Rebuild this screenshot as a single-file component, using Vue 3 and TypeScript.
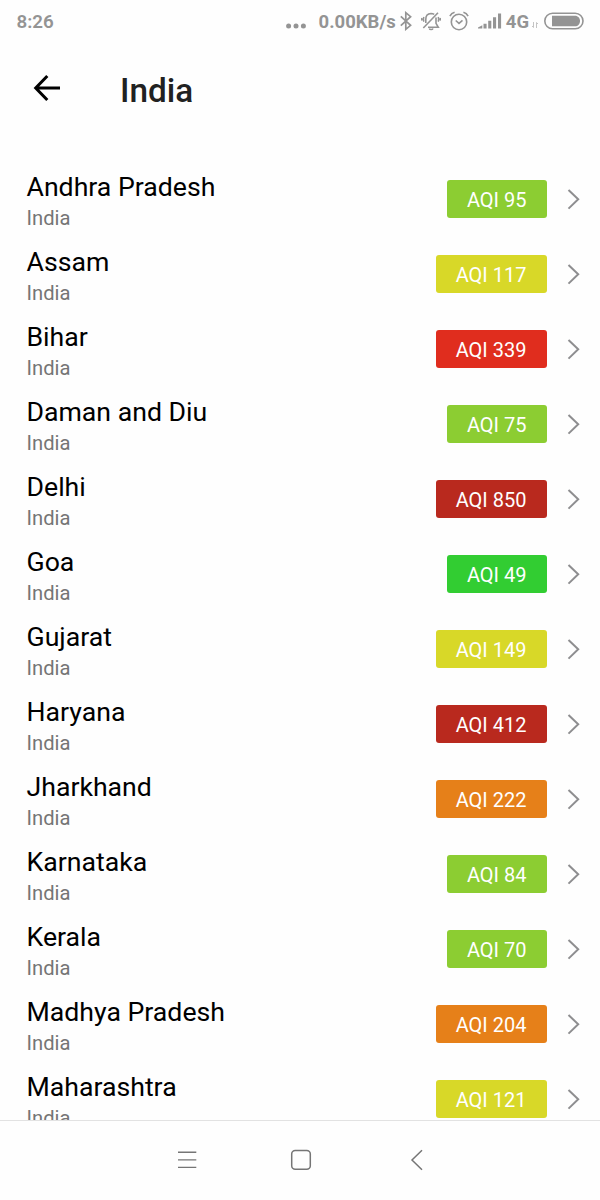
<script setup lang="ts">
interface Region {
  name: string
  aqi: number
  level: 'good' | 'fair' | 'moderate' | 'poor' | 'bad' | 'severe'
}

const country = 'India'

const regions: Region[] = [
  { name: 'Andhra Pradesh', aqi: 95, level: 'fair' },
  { name: 'Assam', aqi: 117, level: 'moderate' },
  { name: 'Bihar', aqi: 339, level: 'bad' },
  { name: 'Daman and Diu', aqi: 75, level: 'fair' },
  { name: 'Delhi', aqi: 850, level: 'severe' },
  { name: 'Goa', aqi: 49, level: 'good' },
  { name: 'Gujarat', aqi: 149, level: 'moderate' },
  { name: 'Haryana', aqi: 412, level: 'severe' },
  { name: 'Jharkhand', aqi: 222, level: 'poor' },
  { name: 'Karnataka', aqi: 84, level: 'fair' },
  { name: 'Kerala', aqi: 70, level: 'fair' },
  { name: 'Madhya Pradesh', aqi: 204, level: 'poor' },
  { name: 'Maharashtra', aqi: 121, level: 'moderate' },
]
</script>

<template>
  <div class="screen">
    <div class="status">
      <span class="clock">8:26</span>
      <div class="indicators">
        <svg class="dots" width="20" height="6" viewBox="0 0 20 6" fill="#949494">
          <circle cx="2.6" cy="3" r="2.5" />
          <circle cx="10" cy="3" r="2.5" />
          <circle cx="17.4" cy="3" r="2.5" />
        </svg>
        <span class="speed">0.00KB/s</span>
        <svg class="bluetooth" width="14" height="20" viewBox="0 0 14 20" fill="none" stroke="#949494" stroke-width="1.7">
          <path d="M1.8 5.4 11.6 14.3 6.8 18.3V1.7l4.8 4L1.8 14.6" />
        </svg>
        <svg class="bell" width="20" height="20" viewBox="0 0 20 20" fill="none" stroke="#949494" stroke-width="1.6">
          <path d="M4.800 12V8.200C4.800 5 6.800 2.700 10 2.500c1.200 0 2.300.3 3.200.9M15 6.500v5.800l2.300 4H7" />
          <path d="M17 1.700 2.300 17" />
          <path d="M8.300 17.500c.5 1.400 3.100 1.400 3.700 0" />
          <path d="M2.900 6c-.6 1.500-.6 3.200 0 4.600M1 7.100c-.4.900-.4 1.600 0 2.400M17.200 6c.6 1.500.6 3.200 0 4.600M19.100 7.100c.4.900.4 1.600 0 2.400" />
        </svg>
        <svg class="alarm" width="20" height="20" viewBox="0 0 20 20" fill="none" stroke="#949494" stroke-width="1.6">
          <circle cx="10" cy="11" r="7.700" />
          <path d="M6.700 9.500 10 12.400l3.500-3M.9 5.200C1.800 3.300 3.400 1.900 5.600 1.300M14.400 1.300c2.200.6 3.800 2 4.700 3.900" />
        </svg>
        <svg class="signal" width="24" height="16" viewBox="0 0 24 16" fill="#949494">
          <path d="M0 15.500v-1l4.300-2.300v3.300zM5.500 10.700h3.100v4.800H5.500zM10.200 7.700h3.100v7.800h-3.100zM15 4.300h3.100v11.200H15zM20 .5h3.100v15H20z" />
        </svg>
        <span class="network">4G</span>
        <svg class="traffic" width="8" height="8" viewBox="0 0 8 8" fill="none" stroke="#c4c4c4" stroke-width="1">
          <path d="M2.500 1v5.500L1 5M5.500 7V1.500L7 3" />
        </svg>
        <svg class="battery" width="40" height="18" viewBox="0 0 40 18">
          <rect x=".8" y="1.200" width="38.200" height="15.600" rx="7.800" fill="none" stroke="#949494" stroke-width="1.600" />
          <path d="M8 3.700H31c3 0 5 2.400 5 5.300s-2 5.300-5 5.300H8z" fill="#949494" />
        </svg>
      </div>
    </div>

    <header class="toolbar">
      <svg class="back" width="28" height="28" viewBox="0 0 28 28" fill="none" stroke="#000" stroke-width="3">
        <path d="M27 14H2.800M14.300 2 2.700 14l11.600 12" />
      </svg>
      <h1>{{ country }}</h1>
    </header>

    <ul class="list">
      <li v-for="region in regions" :key="region.name" class="row">
        <div class="labels">
          <span class="name">{{ region.name }}</span>
          <span class="country">{{ country }}</span>
        </div>
        <span class="badge" :class="region.level">AQI {{ region.aqi }}</span>
        <svg class="chevron" width="13" height="22" viewBox="0 0 13 22" fill="none" stroke="#8e8e90" stroke-width="2">
          <path d="M1.500 2 11.200 11.300 1.500 20.600" />
        </svg>
      </li>
    </ul>

    <nav class="navbar">
      <svg width="20" height="20" viewBox="0 0 20 20" stroke="#757575" stroke-width="1.400">
        <path d="M1 2.300h18.300M1 9.900h18.300M1 17.400h18.300" />
      </svg>
      <svg class="home" width="22" height="22" viewBox="0 0 22 22" fill="none" stroke="#757575" stroke-width="1.500">
        <rect x="1.700" y="1.600" width="18.600" height="18.600" rx="3.500" />
      </svg>
      <svg class="previous" width="14" height="22" viewBox="0 0 14 22" fill="none" stroke="#757575" stroke-width="1.500">
        <path d="M12 1.300 2 11l10 9.700" />
      </svg>
    </nav>
  </div>
</template>

<style>
body {
  margin: 0;
}
</style>

<style scoped>
.screen {
  display: flex;
  flex-direction: column;
  width: 600px;
  height: 1200px;
  overflow: hidden;
  background: #fefefe;
  font-family: Roboto, "Liberation Sans", sans-serif;
}

.status {
  display: flex;
  flex: none;
  justify-content: space-between;
  align-items: center;
  box-sizing: border-box;
  height: 43px;
  padding: 0 17px 0 16.500px;
  color: #949494;
  font-size: 18.500px;
  font-weight: 700;
  line-height: 22px;
}

.clock {
  font-size: 18.800px;
  font-weight: 600;
}

.indicators {
  display: flex;
  align-items: center;
}

.dots {
  margin: 9px 13px 0 0;
}

.bluetooth {
  margin: 0 0 1px 3px;
}

.bell {
  margin: 0 0 1px 8px;
}

.alarm {
  margin: 0 0 1px 8px;
}

.signal {
  margin: 0 0 2px 9px;
}

.network {
  margin-left: 4px;
}

.traffic {
  margin: 6px 5px 0 2px;
}

.battery {
  margin: 0 -1px 2px 0;
}

.toolbar {
  display: flex;
  flex: none;
  align-items: center;
  height: 92px;
  padding-left: 33px;
}

.back {
  margin-top: -2px;
}

h1 {
  margin: 3px 0 0 59px;
  color: #212121;
  font-size: 33.300px;
  font-weight: 500;
  line-height: 40px;
}

.list {
  flex: 1;
  min-height: 0;
  margin: 0;
  padding: 26px 0 0;
  overflow: hidden;
  list-style: none;
}

.row {
  display: flex;
  align-items: center;
  box-sizing: border-box;
  height: 75px;
  padding: 0 20px 0 26.500px;
}

.labels {
  display: flex;
  flex: 1;
  flex-direction: column;
  padding-top: 5px;
}

.name {
  color: #000;
  font-size: 26.670px;
  line-height: 34px;
}

.country {
  color: #757575;
  font-size: 20.200px;
  line-height: 28px;
}

.badge {
  height: 38px;
  padding: 0 20.500px 0 19.500px;
  border-radius: 3px;
  color: #fff;
  font-size: 20px;
  line-height: 40px;
}

.good {
  background: #32cd32;
}

.fair {
  background: #8ccd32;
}

.moderate {
  background: #d8d828;
}

.poor {
  background: #e68019;
}

.bad {
  background: #e02d1e;
}

.severe {
  background: #b9291e;
}

.chevron {
  margin-left: 20px;
}

.navbar {
  display: flex;
  flex: none;
  align-items: center;
  box-sizing: border-box;
  height: 80px;
  padding: 0 0 2px 177px;
  border-top: 1px solid #e2e2e2;
}

.home {
  margin-left: 92.500px;
}

.previous {
  margin-left: 98px;
}
</style>
